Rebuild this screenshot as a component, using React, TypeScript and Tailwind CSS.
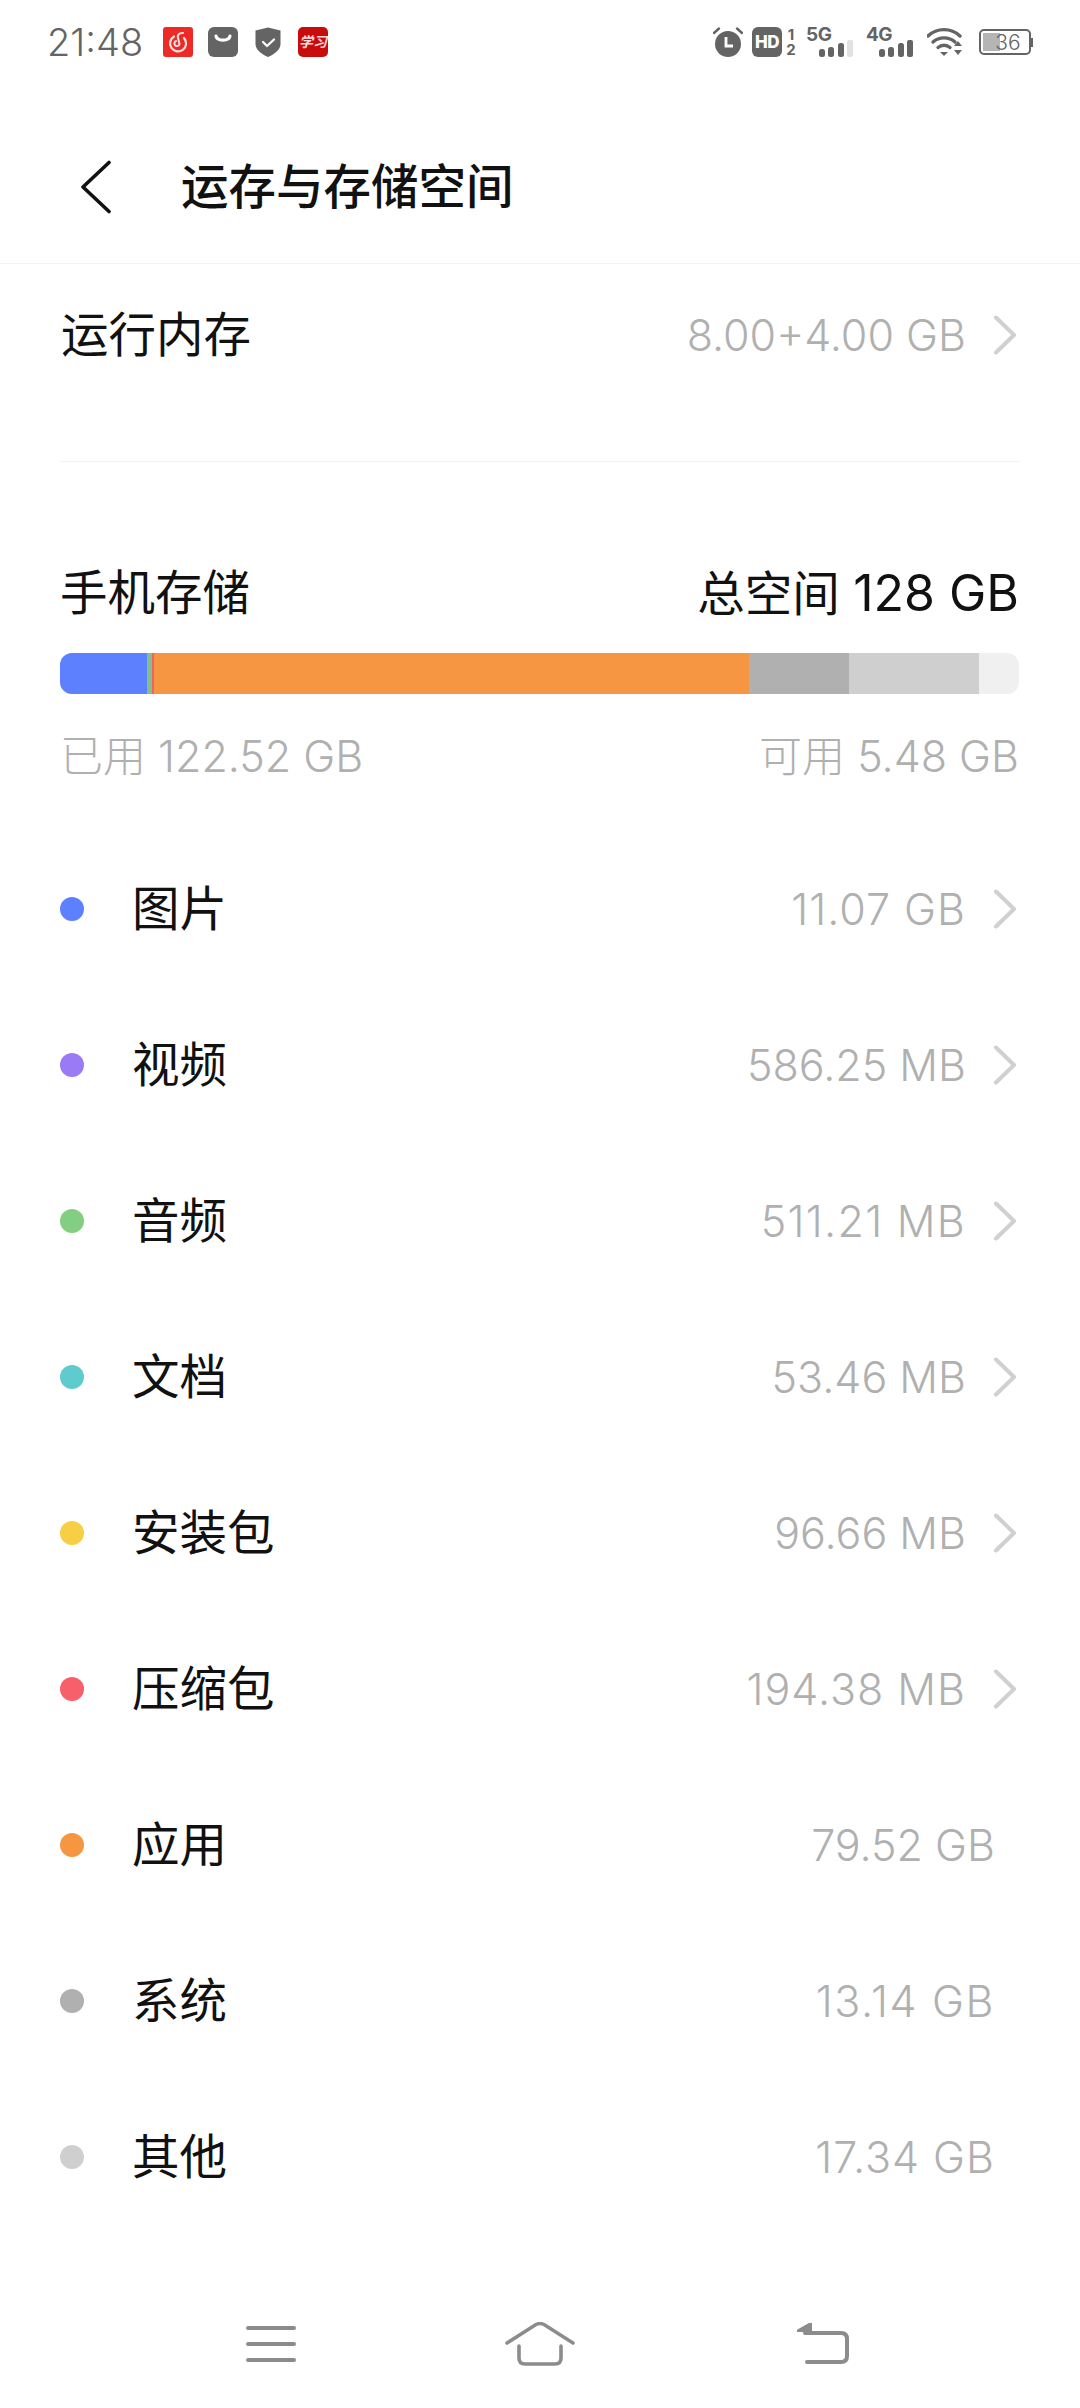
import React from 'react';

const font = { fontFamily: 'Inter, "Noto Sans CJK SC", sans-serif' };

const rows = [
  { name: '图片', value: '11.07 GB', dot: 'bg-[#5c80ff]', arrow: true, track: 'tracking-[1px]' },
  { name: '视频', value: '586.25 MB', dot: 'bg-[#9a7bf5]', arrow: true, track: '' },
  { name: '音频', value: '511.21 MB', dot: 'bg-[#82cf82]', arrow: true, track: 'tracking-[1.3px]' },
  { name: '文档', value: '53.46 MB', dot: 'bg-[#5fcbcf]', arrow: true, track: '' },
  { name: '安装包', value: '96.66 MB', dot: 'bg-[#f7cf45]', arrow: true, track: '' },
  { name: '压缩包', value: '194.38 MB', dot: 'bg-[#f7606a]', arrow: true, track: 'tracking-[1px]' },
  { name: '应用', value: '79.52 GB', dot: 'bg-[#f79642]', arrow: false, track: '' },
  { name: '系统', value: '13.14 GB', dot: 'bg-[#b0b0b0]', arrow: false, track: 'tracking-[1.6px]' },
  { name: '其他', value: '17.34 GB', dot: 'bg-[#cfcfcf]', arrow: false, track: 'tracking-[1px]' },
];

function Chevron() {
  return (
    <svg width="24" height="40" viewBox="0 0 24 40" fill="none" className="shrink-0">
      <path d="M3 2.5 L21 20 L3 37.5" stroke="#d0d0d0" strokeWidth="4" strokeLinecap="round" strokeLinejoin="round" />
    </svg>
  );
}

function StatusLeftIcons() {
  return (
    <div className="flex items-center ml-[23px]">
      {/* music app */}
      <svg width="30" height="30" viewBox="0 0 30 30">
        <rect width="30" height="30" rx="3" fill="#ee2a26" />
        <path d="M11 9.5 A8 8 0 1 0 21 11" fill="none" stroke="#fbe3e0" strokeWidth="2.2" strokeLinecap="round" />
        <path d="M20 6 C16 5.5 14 8.5 15 11 L16.5 17 A2.6 2.6 0 1 1 13 14" fill="none" stroke="#fbe3e0" strokeWidth="2" strokeLinecap="round" />
      </svg>
      {/* bag */}
      <svg width="30" height="30" viewBox="0 0 30 30" className="ml-[15px]">
        <rect width="30" height="30" rx="6" fill="#646464" />
        <path d="M8 9 C9 14.5 21 14.5 22 9" fill="none" stroke="#fff" strokeWidth="3.2" strokeLinecap="round" />
      </svg>
      {/* shield */}
      <svg width="26" height="30" viewBox="0 0 26 30" className="ml-[17px]">
        <path d="M13 0.5 L25.5 3.5 V17 C25.5 23 19 27.5 13 30 C7 27.5 0.5 23 0.5 17 V3.5 Z" fill="#646464" />
        <path d="M8 15 L12 19 L19 12.5" fill="none" stroke="#fff" strokeWidth="2.2" strokeLinecap="round" strokeLinejoin="round" />
      </svg>
      {/* red news app */}
      <div className="ml-[17px] w-[30px] h-[30px] rounded-[5px] bg-[#c80c0c] flex items-center justify-center overflow-hidden text-[#ffd9d9] text-[14px] leading-none italic font-bold">
        学习
      </div>
    </div>
  );
}

function SignalBars({ label, lastFill }: { label: string; lastFill: string }) {
  return (
    <div className="relative w-[48px] h-[30px]">
      <svg width="48" height="30" viewBox="0 0 48 30">
        <rect x="13" y="22" width="6" height="8" rx="2.5" fill="#646464" />
        <rect x="22" y="20" width="6" height="10" rx="2.5" fill="#646464" />
        <rect x="32" y="16" width="6" height="14" rx="2.5" fill="#646464" />
        <rect x="41" y="13" width="6" height="17" rx="2" fill={lastFill} />
      </svg>
      <span className="absolute left-0 top-0 text-[19px] leading-[16px] font-bold text-[#646464] tracking-[-0.5px]">{label}</span>
    </div>
  );
}

function StatusRightIcons() {
  return (
    <div className="flex items-center">
      {/* alarm */}
      <svg width="30" height="30" viewBox="0 0 30 30">
        <circle cx="15" cy="17" r="13" fill="#646464" />
        <path d="M1 6 L6 1.5 M29 6 L24 1.5" stroke="#646464" strokeWidth="2.4" strokeLinecap="round" />
        <path d="M13 10 V19 H20" fill="none" stroke="#fff" strokeWidth="2.8" />
      </svg>
      {/* HD 1 2 */}
      <div className="ml-[9px] w-[30px] h-[30px] rounded-[6px] bg-[#646464] flex items-center justify-center text-white text-[17px] font-extrabold leading-none tracking-[-0.5px]">
        HD
      </div>
      <div className="ml-[3px] w-[12px] h-[30px] flex flex-col items-center text-[#646464] text-[15px] font-bold leading-[15px]">
        <span>1</span>
        <span>2</span>
      </div>
      <div className="ml-[9px]">
        <SignalBars label="5G" lastFill="#e2e2e2" />
      </div>
      <div className="ml-[12px]">
        <SignalBars label="4G" lastFill="#646464" />
      </div>
      {/* wifi */}
      <svg width="37" height="30" viewBox="0 0 37 30" className="ml-[13px]">
        <path d="M1 9 C10 0.5 24 0.5 33 9" fill="none" stroke="#646464" strokeWidth="3.4" strokeLinecap="round" />
        <path d="M6 15 C12 9.5 22 9.5 28 15" fill="none" stroke="#646464" strokeWidth="3.4" strokeLinecap="round" />
        <path d="M11 20.5 C14.5 17.5 19.5 17.5 23 20.5" fill="none" stroke="#646464" strokeWidth="3.4" strokeLinecap="round" />
        <path d="M13 25 H21 L17 29 Z" fill="#646464" />
        <path d="M27 19 L31 14 L35 19 Z" fill="#646464" />
        <path d="M27 23 H35 L31 28 Z" fill="#646464" />
      </svg>
      {/* battery */}
      <div className="ml-[15px] flex items-center">
        <div className="relative w-[52px] h-[26px] rounded-[5px] border-2 border-[#646464] overflow-hidden">
          <div className="absolute left-[2px] top-[2px] bottom-[2px] w-[17px] bg-[#b5b5b5]" />
          <div className="absolute inset-0 flex items-center justify-center pl-[6px] text-[#646464] text-[21px] leading-none font-light">36</div>
        </div>
        <div className="w-[2px] h-[9px] bg-[#646464]" />
      </div>
    </div>
  );
}

export default function App() {
  return (
    <div className="w-[1080px] h-[2408px] bg-white flex flex-col overflow-hidden" style={font}>
      {/* Status bar */}
      <div className="h-[84px] shrink-0 flex items-center justify-between pl-[47px] pr-[47px]">
        <div className="flex items-center">
          <span className="text-[#646464] text-[38px] leading-none font-light w-[93px]">21:48</span>
          <StatusLeftIcons />
        </div>
        <StatusRightIcons />
      </div>

      {/* Header */}
      <div className="h-[180px] shrink-0 flex items-center pt-[26px] border-b border-[#f3f3f3]">
        <svg width="32" height="54" viewBox="0 0 32 54" fill="none" className="ml-[80px]">
          <path d="M29 2.5 L3 27 L29 51.5" stroke="#111" strokeWidth="3.6" strokeLinecap="round" strokeLinejoin="round" />
        </svg>
        <h1 className="ml-[69px] text-[47.5px] leading-none text-[#111] font-medium">运存与存储空间</h1>
      </div>

      {/* Memory */}
      <div className="h-[142px] shrink-0 flex items-center justify-between pl-[61px] pr-[63px]">
        <span className="text-[47.5px] leading-none text-[#111]">运行内存</span>
        <div className="flex items-center gap-[27px]">
          <span className="text-[43px] leading-none font-light text-[#b0b0b0]">8.00+4.00 GB</span>
          <Chevron />
        </div>
      </div>
      <div className="h-px mt-[55px] mx-[60px] bg-[#f3f3f3] shrink-0" />

      {/* Storage */}
      <div className="mt-[99px] ml-[60px] mr-[61px] h-[64px] flex items-center justify-between shrink-0">
        <span className="text-[47.5px] leading-none text-[#111]">手机存储</span>
        <span className="text-[47.5px] leading-none text-[#111]">总空间 <span className="text-[50px]">128 GB</span></span>
      </div>
      <div className="mt-[28px] ml-[60px] mr-[61px] h-[41px] rounded-[12px] overflow-hidden flex bg-[#f0f0f0] shrink-0">
        <div className="w-[87px] bg-[#5c80ff]" />
        <div className="w-[5px] bg-[#82c08a]" />
        <div className="w-[2px] bg-[#f7606a]" />
        <div className="w-[595px] bg-[#f79642]" />
        <div className="w-[100px] bg-[#b0b0b0]" />
        <div className="w-[130px] bg-[#cfcfcf]" />
      </div>
      <div className="mt-[37px] ml-[60px] mr-[61px] h-[50px] flex items-center justify-between shrink-0 text-[43px] leading-none font-light text-[#b0b0b0]">
        <span>已用 122.52 GB</span>
        <span>可用 5.48 GB</span>
      </div>

      {/* Category list */}
      <div className="mt-[50px] flex flex-col shrink-0">
        {rows.map((row) => (
          <div key={row.name} className="h-[156px] flex items-center pl-[60px] pr-[63px]">
            <div className={`w-[24px] h-[24px] rounded-full ${row.dot}`} />
            <span className="ml-[48px] text-[47.5px] leading-none text-[#111]">{row.name}</span>
            <div className="ml-auto flex items-center gap-[27px]">
              <span className={`text-[43px] leading-none font-light text-[#b0b0b0] ${row.track} ${row.arrow ? '' : 'mr-[22px]'}`}>{row.value}</span>
              {row.arrow && <Chevron />}
            </div>
          </div>
        ))}
      </div>

      {/* Navigation bar */}
      <div className="mt-[87px] ml-[246px] mr-[231px] flex items-center shrink-0">
        <svg width="50" height="40" viewBox="0 0 50 40">
          <path d="M2 4 H48 M2 20 H48 M2 36 H48" stroke="#8c8c8c" strokeWidth="4" strokeLinecap="round" />
        </svg>
        <svg width="70" height="44" viewBox="0 0 70 44" fill="none" className="ml-[209px]">
          <path d="M2 21 L31 2.5 Q35 0.5 39 2.5 L68 21" stroke="#8c8c8c" strokeWidth="3.4" strokeLinecap="round" strokeLinejoin="round" />
          <path d="M14 24 V36 Q14 42 20 42 H50 Q56 42 56 36 V24" stroke="#8c8c8c" strokeWidth="3.6" strokeLinecap="round" />
        </svg>
        <svg width="52" height="42" viewBox="0 0 52 42" fill="none" className="ml-auto">
          <path d="M0 8 L14 0 V8 Z" fill="#8c8c8c" stroke="#8c8c8c" strokeWidth="2" strokeLinejoin="round" />
          <path d="M8 10 H44 Q50 10 50 16 V33 Q50 39 44 39 H10" stroke="#8c8c8c" strokeWidth="4" strokeLinecap="round" />
        </svg>
      </div>
    </div>
  );
}
